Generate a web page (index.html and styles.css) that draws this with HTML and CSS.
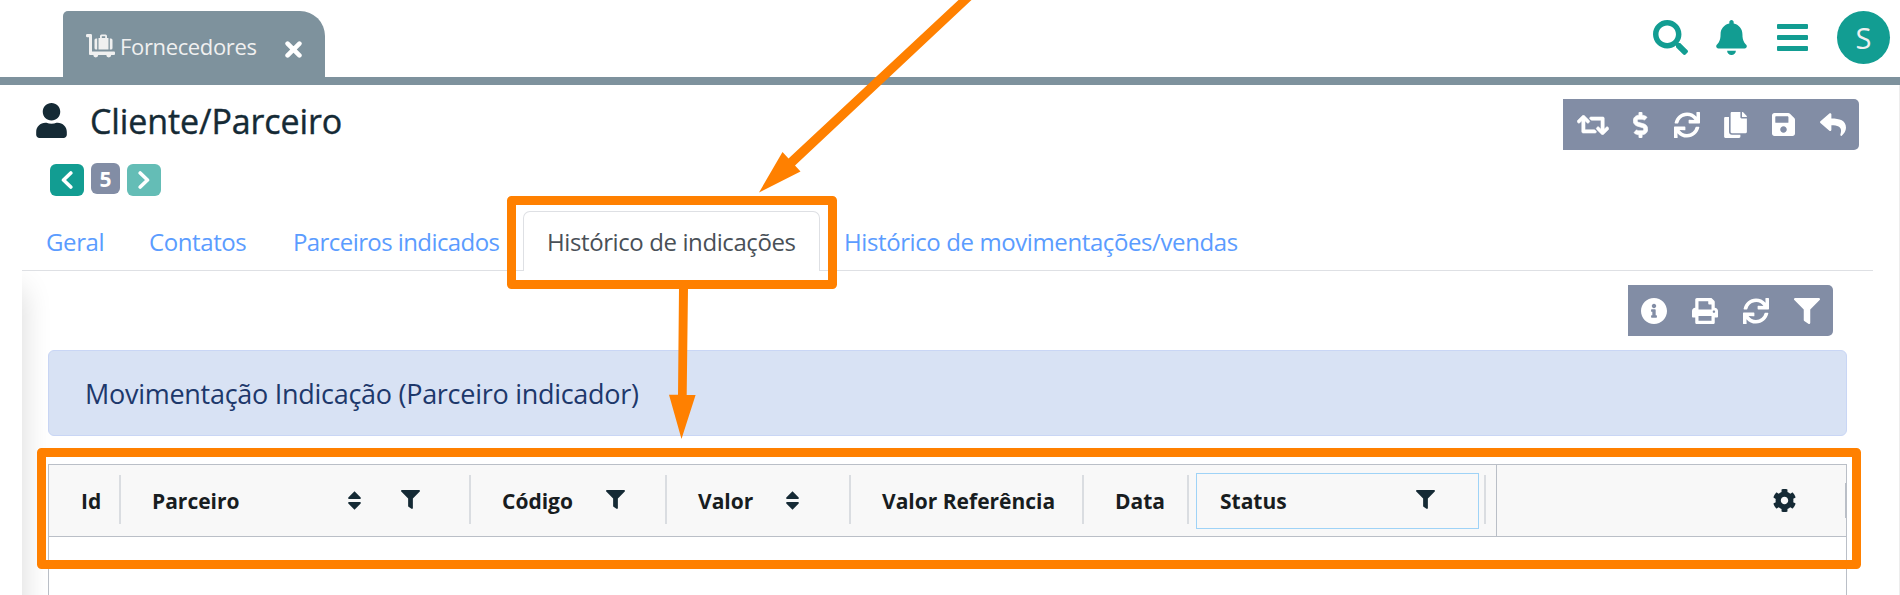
FILE: index.html
```html
<!DOCTYPE html>
<html lang="pt-BR">
<head>
<meta charset="utf-8">
<title>Cliente/Parceiro</title>
<link rel="stylesheet" href="styles.css">
</head>
<body>
<svg class="sprite" aria-hidden="true">
  <symbol id="sync" viewBox="0 0 512 512"><path d="M440.65 12.57l4 82.77A247.16 247.16 0 0 0 255.83 8C134.73 8 33.91 94.92 12.29 209.82A12 12 0 0 0 24.09 224h49.050a12 12 0 0 0 11.67-9.26 175.91 175.91 0 0 1 317-56.94l-101.46-4.86a12 12 0 0 0-12.57 12v47.41a12 12 0 0 0 12 12H500a12 12 0 0 0 12-12V12a12 12 0 0 0-12-12h-47.37a12 12 0 0 0-11.98 12.57zM255.83 432a175.61 175.61 0 0 1-146-77.8l101.8 4.87a12 12 0 0 0 12.57-12v-47.4a12 12 0 0 0-12-12H12a12 12 0 0 0-12 12V500a12 12 0 0 0 12 12h47.35a12 12 0 0 0 12-12.6l-4.15-82.57A247.17 247.17 0 0 0 255.83 504c121.11 0 221.93-86.92 243.55-201.82a12 12 0 0 0-11.8-14.18h-49.05a12 12 0 0 0-11.67 9.26A175.86 175.86 0 0 1 255.83 432z"/></symbol>
  <symbol id="filter" viewBox="0 0 512 512"><path d="M487.976 0H24.028C2.71 0-8.047 25.866 7.058 40.971L192 225.941V432c0 7.831 3.821 15.17 10.237 19.662l80 55.98C298.02 518.69 320 507.493 320 487.98V225.941l184.947-184.97C520.021 25.896 509.338 0 487.976 0z"/></symbol>
  <symbol id="sort" viewBox="0 0 13 19"><path d="M6.500 0.300L12.700 6.500Q13.200 8 12 8H1Q-0.200 8 0.300 6.500ZM6.500 18.700L12.700 12.500Q13.200 11 12 11H1Q-0.200 11 0.300 12.500Z"/></symbol>
</svg>

<header class="topbar">
  <div class="window-tab">
    <svg class="cart" viewBox="0 0 29 24"><path d="M0 1.300Q0 0 1.300 0H4.700Q6 0 6 1.300V17.500H28Q29 17.500 29 18.500V20Q29 21 28 21H25.200A2.400 2.400 0 1 1 20.300 21H12.200A2.400 2.400 0 1 1 7.300 21H4Q3 21 3 20V3.200H1.300Q0 3.200 0 2Z"/><path fill-rule="evenodd" d="M12.500 15.500V4H14V2Q14 0.500 15.500 0.500H19.500Q21 0.500 21 2V4H22.500V15.500ZM15.800 4H19.200V2.300H15.800Z"/><path d="M11.200 4.500V15.500H10Q8.500 15.500 8.500 14V6Q8.500 4.500 10 4.500ZM23.800 4.500H25Q26.500 4.500 26.500 6V14Q26.500 15.500 25 15.500H23.800Z"/></svg>
    <span class="window-name">Fornecedores</span>
    <svg class="close" viewBox="0 0 17 17"><path d="M2.600 2.600L14.400 14.400M14.400 2.600L2.600 14.400"/></svg>
  </div>
  <div class="actions">
    <svg class="search" viewBox="0 0 512 512"><path d="M505 442.7L405.3 343c-4.500-4.500-10.600-7-17-7H372c27.600-35.300 44-79.700 44-128C416 93.100 322.900 0 208 0S0 93.100 0 208s93.100 208 208 208c48.300 0 92.700-16.400 128-44v16.300c0 6.400 2.500 12.500 7 17l99.700 99.700c9.400 9.400 24.600 9.400 33.900 0l28.300-28.300c9.400-9.400 9.400-24.600.1-34zM208 336c-70.700 0-128-57.200-128-128 0-70.700 57.200-128 128-128 70.700 0 128 57.200 128 128 0 70.700-57.200 128-128 128z"/></svg>
    <svg class="bell" viewBox="0 0 448 512"><path d="M224 512c35.320 0 63.970-28.650 63.970-64H160.030c0 35.350 28.650 64 63.970 64zm215.390-149.710c-19.320-20.760-55.470-51.990-55.470-154.290 0-77.700-54.480-139.900-127.940-155.160V32c0-17.670-14.320-32-31.980-32s-31.980 14.330-31.980 32v20.840C118.560 68.100 64.080 130.300 64.080 208c0 102.300-36.150 133.530-55.470 154.290-6 6.450-8.660 14.160-8.610 21.710.11 16.400 12.980 32 32.100 32h383.800c19.120 0 32-15.600 32.100-32 .05-7.550-2.610-15.270-8.610-21.710z"/></svg>
    <svg class="bars" viewBox="0 0 31 27"><rect width="31" height="5" rx="1"/><rect y="11" width="31" height="5" rx="1"/><rect y="22" width="31" height="5" rx="1"/></svg>
    <div class="avatar">S</div>
  </div>
</header>

<main class="page">
  <section class="page-head">
    <div>
      <div class="heading">
        <svg class="user" viewBox="0 0 448 512"><path d="M224 256c70.700 0 128-57.300 128-128S294.700 0 224 0 96 57.300 96 128s57.300 128 128 128zm89.600 32h-16.700c-22.200 10.200-46.900 16-72.900 16s-50.600-5.800-72.900-16h-16.700C60.200 288 0 348.200 0 422.400V464c0 26.500 21.500 48 48 48h352c26.500 0 48-21.500 48-48v-41.600c0-74.200-60.200-134.400-134.400-134.400z"/></svg>
        <h1>Cliente/Parceiro</h1>
      </div>
      <div class="pager">
        <span class="step"><svg viewBox="0 0 12 18"><path d="M9.800 2L2.500 9L9.800 16"/></svg></span>
        <span class="number">5</span>
        <span class="step disabled"><svg viewBox="0 0 12 18"><path d="M2.200 2L9.500 9L2.200 16"/></svg></span>
      </div>
    </div>
    <div class="toolbar toolbar-main">
      <svg class="retweet" viewBox="0 60 640 392"><path d="M629.657 343.598L528.971 444.284c-9.373 9.372-24.568 9.372-33.941 0L394.343 343.598c-9.373-9.373-9.373-24.569 0-33.941l10.823-10.823c9.562-9.562 25.133-9.34 34.419.492L480 342.118V160H292.451a24.005 24.005 0 0 1-16.971-7.029l-16-16C244.361 121.851 255.069 96 276.451 96H520c13.255 0 24 10.745 24 24v222.118l40.416-42.792c9.285-9.831 24.856-10.054 34.419-.492l10.823 10.823c9.372 9.372 9.372 24.569-.001 33.941zm-265.138 15.431A23.999 23.999 0 0 0 347.548 352H160V169.881l40.416 42.792c9.286 9.831 24.856 10.054 34.419.491l10.822-10.822c9.373-9.373 9.373-24.569 0-33.941L144.971 67.716c-9.373-9.373-24.569-9.373-33.941 0L10.343 168.402c-9.373 9.373-9.373 24.569 0 33.941l10.822 10.822c9.562 9.562 25.133 9.34 34.419-.491L96 169.882V392c0 13.255 10.745 24 24 24h243.549c21.382 0 32.09-25.851 16.971-40.971l-16.001-16z"/></svg>
      <svg class="dollar" viewBox="0 0 288 512"><path d="M209.2 233.4l-108-31.600C88.700 198.200 80 186.500 80 173.500c0-16.300 13.200-29.500 29.500-29.500h66.300c12.200 0 24.200 3.700 34.200 10.500 6.100 4.100 14.300 3.100 19.500-2l34.800-34c7.100-6.900 6.100-18.400-1.800-24.500C238 74.800 207.400 64.100 176 64V16c0-8.800-7.200-16-16-16h-32c-8.800 0-16 7.200-16 16v48h-2.500C45.800 64-5.400 118.700.5 183.600c4.200 46.100 39.400 83.600 83.800 96.600l102.500 30c12.500 3.700 21.200 15.300 21.200 28.300 0 16.300-13.200 29.500-29.500 29.500h-66.300C100 368 88 364.300 78 357.500c-6.100-4.100-14.300-3.100-19.500 2l-34.800 34c-7.100 6.900-6.100 18.400 1.800 24.500 24.500 19.200 55.100 29.900 86.500 30v48c0 8.800 7.200 16 16 16h32c8.800 0 16-7.200 16-16v-48.200c46.600-.9 90.300-28.600 105.700-72.700 21.500-61.600-14.600-124.800-72.500-141.700z"/></svg>
      <svg class="sync"><use href="#sync"/></svg>
      <svg class="copy" viewBox="0 0 448 512"><path d="M320 448v40c0 13.255-10.745 24-24 24H24c-13.255 0-24-10.745-24-24V120c0-13.255 10.745-24 24-24h72v296c0 30.879 25.121 56 56 56h168zm0-344V0H152c-13.255 0-24 10.745-24 24v368c0 13.255 10.745 24 24 24h272c13.255 0 24-10.745 24-24V128H344c-13.200 0-24-10.800-24-24zm120.971-31.029L375.029 7.029A24 24 0 0 0 358.059 0H352v96h96v-6.059a24 24 0 0 0-7.029-16.970z"/></svg>
      <svg class="save" viewBox="0 32 448 448"><path d="M433.941 129.941l-83.882-83.882A48 48 0 0 0 316.118 32H48C21.490 32 0 53.490 0 80v352c0 26.510 21.490 48 48 48h352c26.510 0 48-21.490 48-48V163.882a48 48 0 0 0-14.059-33.941zM224 416c-35.346 0-64-28.654-64-64 0-35.346 28.654-64 64-64s64 28.654 64 64c0 35.346-28.654 64-64 64zm96-304.520V212c0 6.627-5.373 12-12 12H76c-6.627 0-12-5.373-12-12V108c0-6.627 5.373-12 12-12h228.520c3.183 0 6.235 1.264 8.485 3.515l3.480 3.480A11.996 11.996 0 0 1 320 111.480z"/></svg>
      <svg class="reply" viewBox="0 32 512 448"><path d="M8.309 189.836L184.313 37.851C199.719 24.546 224 35.347 224 56.015v80.053c160.629 1.839 288 34.032 288 186.258 0 61.441-39.581 122.309-83.333 154.132-13.653 9.931-33.111-2.533-28.077-18.631 45.344-145.012-21.507-183.510-176.590-185.742V360c0 20.700-24.300 31.453-39.687 18.164l-176.004-152c-11.071-9.562-11.086-26.753 0-36.328z"/></svg>
    </div>
  </section>

  <nav class="tabs">
    <a class="tab general"><span>Geral</span></a>
    <a class="tab contacts"><span>Contatos</span></a>
    <a class="tab partners"><span>Parceiros indicados</span></a>
    <a class="tab history active"><span>Histórico de indicações</span></a>
    <a class="tab moves"><span>Histórico de movimentações/vendas</span></a>
  </nav>

  <section class="panel">
    <div class="toolbar toolbar-panel">
      <svg class="square" viewBox="8 8 496 496"><path d="M256 8C119.043 8 8 119.083 8 256c0 136.997 111.043 248 248 248s248-111.003 248-248C504 119.083 392.957 8 256 8zm0 110c23.196 0 42 18.804 42 42s-18.804 42-42 42-42-18.804-42-42 18.804-42 42-42zm56 254c0 6.627-5.373 12-12 12h-88c-6.627 0-12-5.373-12-12v-24c0-6.627 5.373-12 12-12h12v-64h-12c-6.627 0-12-5.373-12-12v-24c0-6.627 5.373-12 12-12h64c6.627 0 12 5.373 12 12v100h12c6.627 0 12 5.373 12 12v24z"/></svg>
      <svg class="square" viewBox="0 0 512 512"><path d="M448 192V77.250c0-8.490-3.370-16.620-9.370-22.630L393.370 9.370c-6-6-14.140-9.370-22.630-9.370H96C78.330 0 64 14.330 64 32v160c-35.350 0-64 28.650-64 64v112c0 8.840 7.160 16 16 16h48v96c0 17.670 14.330 32 32 32h320c17.670 0 32-14.330 32-32v-96h48c8.840 0 16-7.160 16-16V256c0-35.350-28.650-64-64-64zm-64 256H128v-96h256v96zm0-224H128V64h192v48c0 8.840 7.160 16 16 16h48v96zm48 72c-13.250 0-24-10.750-24-24 0-13.260 10.750-24 24-24s24 10.740 24 24c0 13.250-10.750 24-24 24z"/></svg>
      <svg class="square"><use href="#sync"/></svg>
      <svg class="square"><use href="#filter"/></svg>
    </div>
    <div class="notice"><span>Movimentação Indicação (Parceiro indicador)</span></div>
    <div class="grid">
      <div class="grid-head">
        <div class="cell c-id"><span>Id</span></div>
        <div class="cell c-partner"><span>Parceiro</span><svg class="sort"><use href="#sort"/></svg><svg class="funnel"><use href="#filter"/></svg></div>
        <div class="cell c-code"><span>Código</span><svg class="funnel"><use href="#filter"/></svg></div>
        <div class="cell c-value"><span>Valor</span><svg class="sort"><use href="#sort"/></svg></div>
        <div class="cell c-ref"><span>Valor Referência</span></div>
        <div class="cell c-date"><span>Data</span></div>
        <div class="cell c-status"><div class="focus"><span>Status</span><svg class="funnel"><use href="#filter"/></svg></div></div>
        <div class="c-config">
          <svg class="gear" viewBox="8 8 496 496"><path d="M487.4 315.700l-42.600-24.600c4.300-23.200 4.300-47 0-70.200l42.600-24.600c4.900-2.800 7.100-8.600 5.500-14-11.100-35.600-30-67.800-54.700-94.600-3.800-4.100-10-5.100-14.800-2.300L380.800 110c-17.900-15.400-38.500-27.300-60.800-35.100V25.800c0-5.600-3.900-10.500-9.400-11.700-36.700-8.200-74.300-7.800-109.200 0-5.500 1.200-9.400 6.100-9.400 11.700V75c-22.200 7.900-42.800 19.800-60.800 35.100L88.700 85.500c-4.900-2.800-11-1.900-14.800 2.300-24.700 26.700-43.600 58.900-54.700 94.600-1.700 5.400.6 11.200 5.500 14L67.300 221c-4.300 23.200-4.300 47 0 70.200l-42.600 24.600c-4.900 2.800-7.100 8.600-5.500 14 11.100 35.600 30 67.800 54.700 94.600 3.800 4.100 10 5.100 14.800 2.300l42.600-24.600c17.900 15.400 38.500 27.300 60.800 35.100v49.200c0 5.600 3.900 10.500 9.400 11.700 36.700 8.200 74.300 7.800 109.200 0 5.500-1.200 9.400-6.100 9.400-11.700v-49.200c22.200-7.900 42.800-19.800 60.800-35.100l42.600 24.600c4.900 2.800 11 1.900 14.800-2.300 24.700-26.700 43.600-58.900 54.700-94.600 1.500-5.500-.7-11.300-5.600-14.100zM256 336c-44.100 0-80-35.900-80-80s35.900-80 80-80 80 35.900 80 80-35.900 80-80 80z"/></svg>
          <i class="handle"></i>
        </div>
      </div>
    </div>
  </section>
</main>

<svg class="annotations" viewBox="0 0 1900 595">
  <rect x="511.500" y="200.500" width="321" height="84" />
  <rect x="41.500" y="452.500" width="1815" height="112" />
  <path d="M958.500 0H971.500L795 165.500L800.500 171.500L759 192.500L782.500 152L788.500 158.500ZM679 288H688L686.700 395H695.600L681.500 439L669 394.700H678Z"/>
</svg>
</body>
</html>
```
FILE: styles.css
```css
* { box-sizing: border-box; }
body {
  margin: 0;
  width: 1900px;
  height: 595px;
  overflow: hidden;
  background: #fff;
  font-family: "Open Sans", "Noto Sans", sans-serif;
  color: #152a35;
}
svg { display: block; flex: none; fill: currentColor; }
span { white-space: nowrap; }
.sprite { position: absolute; width: 0; height: 0; }

/* Top bar */
.topbar {
  display: flex;
  justify-content: space-between;
  height: 85px;
  padding: 11px 10px 0 63px;
  border-bottom: 8px solid #7e929d;
}
.window-tab {
  display: flex;
  width: 262px;
  height: 66px;
  padding-left: 23px;
  border-radius: 5px 25px 0 0;
  background: #7e929d;
  color: #f0f0f0;
}
.cart { width: 29px; height: 24px; margin-top: 23px; }
.window-name { width: 165px; margin-left: 5px; font-size: 22px; line-height: 30px; padding-top: 20px; letter-spacing: -0.35px; }
.close { width: 17px; height: 17px; margin: 30px 0 0; fill: none; stroke: #fff; stroke-width: 4.6; stroke-linecap: round; }
.actions { display: flex; color: #129d92; }
.search { width: 35px; height: 35px; margin: 9px 28px 0 0; }
.bell { width: 31px; height: 35px; margin: 9px 30px 0 0; }
.bars { width: 31px; height: 27px; margin: 13px 29px 0 0; }
.avatar {
  width: 53px;
  height: 53px;
  border-radius: 50%;
  background: #129d92;
  color: #f0f0f0;
  font-size: 29px;
  line-height: 53px;
  text-align: center;
}

/* Page heading */
.page { height: 510px; padding-left: 22px; border-right: 1px solid #ededed; }
.page-head { display: flex; justify-content: space-between; height: 126px; padding: 14px 40px 0 14px; }
.heading { display: flex; height: 50px; }
.user { width: 31px; height: 35px; margin-top: 4px; }
h1 { margin: 0 0 0 23px; font-size: 34px; line-height: 44px; font-weight: 500; letter-spacing: -0.1px; -webkit-text-stroke: 0.4px #152a35; }
.pager { display: flex; padding: 15px 0 0 14px; }
.step {
  display: flex;
  align-items: center;
  justify-content: center;
  width: 34px;
  height: 32px;
  border-radius: 6px;
  background: #129d92;
}
.step svg { width: 12px; height: 18px; fill: none; stroke: #fff; stroke-width: 3.6; stroke-linecap: round; stroke-linejoin: round; }
.disabled { background: #64bdb6; }
.number {
  width: 29px;
  height: 31px;
  margin: -1px 7px 0;
  border-radius: 6px;
  background: #828da5;
  color: #fff;
  font-size: 21px;
  font-weight: 700;
  line-height: 33px;
  text-align: center;
}

/* Icon toolbars */
.toolbar { display: flex; align-items: center; height: 51px; border-radius: 0 5px 5px 0; background: #828da5; color: #fff; }
.toolbar-main { width: 296px; padding-left: 14px; }
.retweet { width: 32px; height: 20px; margin-right: 24px; stroke: #fff; stroke-width: 12; }
.dollar { width: 15px; height: 26px; margin-right: 26px; stroke: #fff; stroke-width: 12; }
.sync { width: 26px; height: 26px; margin-right: 24px; }
.copy { width: 23px; height: 26px; margin-right: 25px; }
.save { width: 23px; height: 23px; margin-right: 25px; }
.reply { width: 26px; height: 23px; }

/* Tabs */
.tabs { display: flex; width: 1851px; height: 60px; border-bottom: 1px solid #dee0e4; }
.tab { height: 60px; padding: 12px 0 0 24px; color: #5b9cff; font-size: 24px; line-height: 40px; letter-spacing: -0.4px; }
.tab span { display: block; margin-top: -1px; }
.general { width: 103px; }
.contacts { width: 144px; }
.partners { width: 254px; letter-spacing: -0.58px; }
.history { width: 297px; }
.active { padding: 11px 0 0 23px; border: 1px solid #dee0e4; border-bottom: 0; border-radius: 7px 7px 0 0; background: #fff; color: #495057; }

/* Panel */
.panel { position: relative; width: 1851px; height: 324px; padding: 14px 26px 0; overflow: hidden; }
.panel::before {
  content: "";
  position: absolute;
  left: -30px;
  top: 18px;
  width: 30px;
  height: 400px;
  box-shadow: 0 0 30px rgba(0, 0, 0, 0.16);
}
.toolbar-panel { width: 205px; margin-left: 1580px; padding-left: 13px; gap: 25px; }
.square { width: 26px; height: 26px; }
.notice {
  height: 86px;
  margin-top: 14px;
  padding-left: 36px;
  border: 1px solid #c9d6f5;
  border-radius: 6px;
  background: #d8e2f4;
  color: #1d386b;
  font-size: 27px;
  line-height: 85px;
  letter-spacing: -0.28px;
}

/* Data grid */
.grid { height: 200px; margin-top: 28px; border: 1px solid #babfc7; }
.grid-head { display: flex; height: 73px; margin-top: -1px; border-top: 1px solid #babfc7; border-bottom: 1px solid #babfc7; background: #f8f8f8; color: #181d1f; font-size: 21px; font-weight: 700; }
.cell { position: relative; display: flex; align-items: center; padding-left: 31px; }
.cell::after { content: ""; position: absolute; right: 0; top: 10px; width: 2px; height: 49px; background: #dadde1; }
.cell span { line-height: 30px; }
.c-id { width: 72px; padding-left: 32px; }
.c-partner { width: 350px; }
.c-partner span { width: 196px; }
.c-code { width: 196px; }
.c-code span { width: 104px; }
.c-value { width: 184px; }
.c-value span { width: 88px; }
.c-ref { width: 233px; }
.c-date { width: 105px; }
.c-status { width: 297px; padding-left: 7px; }
.sort { width: 13px; height: 19px; color: #152a35; }
.funnel { width: 19px; height: 19px; margin-bottom: 2px; color: #152a35; }
.sort + .funnel { margin-left: 40px; }
.focus { display: flex; align-items: center; width: 283px; height: 56px; padding-left: 23px; border: 1px solid #9fd3f7; }
.focus span { width: 196px; }
.c-config { display: flex; align-items: center; flex: 1; margin-left: 10px; padding-left: 276px; border-left: 1px solid #babfc7; color: #152a35; }
.gear { width: 23px; height: 23px; }
.handle { width: 1px; height: 35px; margin-left: auto; background: #babfc7; }

/* Callouts drawn over the page */
.annotations { position: absolute; left: 0; top: 0; width: 1900px; height: 595px; fill: #ff8000; }
.annotations rect { fill: none; stroke: #ff8000; stroke-width: 9; stroke-linejoin: round; }
```
